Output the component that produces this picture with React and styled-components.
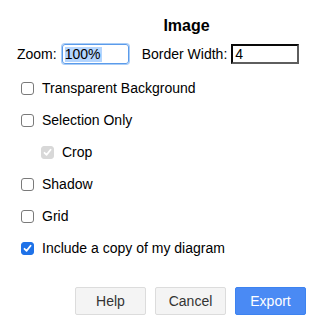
import React from "react";
import styled, { createGlobalStyle } from "styled-components";

const GlobalStyle = createGlobalStyle`
  body {
    margin: 0;
    background: #ffffff;
    font-family: "Liberation Sans", Arial, Helvetica, sans-serif;
    color: #000000;
  }
`;

const Dialog = styled.div`
  width: 329px;
  height: 326px;
  display: flex;
  flex-direction: column;
  box-sizing: border-box;
  padding-top: 17px;
`;

const Title = styled.div`
  font-size: 16px;
  font-weight: bold;
  line-height: 18px;
  text-align: center;
  padding-left: 44px;
`;

const ZoomRow = styled.div`
  display: flex;
  align-items: center;
  margin-top: 9px;
  padding-left: 17px;
  height: 20px;
  font-size: 14px;
`;

const Label = styled.span`
  margin-right: ${(p) => p.gap || 5}px;
`;

const Field = styled.div`
  box-sizing: border-box;
  width: ${(p) => p.width}px;
  height: ${(p) => p.height}px;
  display: flex;
  align-items: center;
  padding-left: 2px;
  font-size: 14px;
  margin-right: ${(p) => p.after || 0}px;
  border: ${(p) =>
    p.focused ? "1px solid #5b9bea" : "2px inset #5e5e5e"};
  border-radius: ${(p) => (p.focused ? "3px" : "0")};
  box-shadow: ${(p) => (p.focused ? "0 0 0 1px #a9cdf7" : "none")};
`;

const Selected = styled.span`
  background: #b4d5fe;
  line-height: 15px;
  padding-right: 1px;
`;

const Options = styled.div`
  display: flex;
  flex-direction: column;
  margin-top: 8px;
`;

const CheckRow = styled.div`
  display: flex;
  align-items: center;
  height: 32px;
  padding-left: ${(p) => (p.indent ? 41 : 21)}px;
  font-size: 14px;
  color: ${(p) => (p.muted ? "#222" : "#000")};
`;

const Box = styled.span`
  box-sizing: border-box;
  width: 13px;
  height: 13px;
  border-radius: 3px;
  margin-right: 8px;
  display: flex;
  align-items: center;
  justify-content: center;
  border: 1px solid
    ${(p) => (p.checked ? (p.disabled ? "#d8d8d8" : "#1f72e8") : "#7a7a7a")};
  background: ${(p) =>
    p.checked ? (p.disabled ? "#d8d8d8" : "#1f72e8") : "#ffffff"};
`;

const Buttons = styled.div`
  display: flex;
  justify-content: flex-end;
  gap: 9px;
  padding-right: 23px;
  margin-top: auto;
  margin-bottom: 11px;
`;

const Button = styled.div`
  box-sizing: border-box;
  width: 71px;
  height: 28px;
  display: flex;
  align-items: center;
  justify-content: center;
  font-size: 14px;
  border-radius: 2px;
  border: 1px solid ${(p) => (p.primary ? "#3d83f0" : "#dcdcdc")};
  background: ${(p) => (p.primary ? "#4a8af4" : "#f4f4f4")};
  color: ${(p) => (p.primary ? "#ffffff" : "#333333")};
`;

function Check({ checked, disabled }) {
  return (
    <Box checked={checked} disabled={disabled}>
      {checked && (
        <svg width="9" height="9" viewBox="0 0 9 9">
          <path
            d="M1.5 4.8 L3.6 6.8 L7.6 1.8"
            fill="none"
            stroke="#ffffff"
            strokeWidth="1.8"
            strokeLinecap="round"
            strokeLinejoin="round"
          />
        </svg>
      )}
    </Box>
  );
}

const options = [
  { label: "Transparent Background" },
  { label: "Selection Only" },
  { label: "Crop", indent: true, checked: true, disabled: true },
  { label: "Shadow" },
  { label: "Grid" },
  { label: "Include a copy of my diagram", checked: true },
];

function App() {
  return (
    <Dialog>
      <GlobalStyle />
      <Title>Image</Title>
      <ZoomRow>
        <Label gap={5}>Zoom:</Label>
        <Field focused width={67} height={20} after={13}>
          <Selected>100%</Selected>
        </Field>
        <Label gap={4}>Border Width:</Label>
        <Field width={68} height={20}>
          4
        </Field>
      </ZoomRow>
      <Options>
        {options.map((o) => (
          <CheckRow key={o.label} indent={o.indent}>
            <Check checked={o.checked} disabled={o.disabled} />
            {o.label}
          </CheckRow>
        ))}
      </Options>
      <Buttons>
        <Button>Help</Button>
        <Button>Cancel</Button>
        <Button primary>Export</Button>
      </Buttons>
    </Dialog>
  );
}

export default App;
